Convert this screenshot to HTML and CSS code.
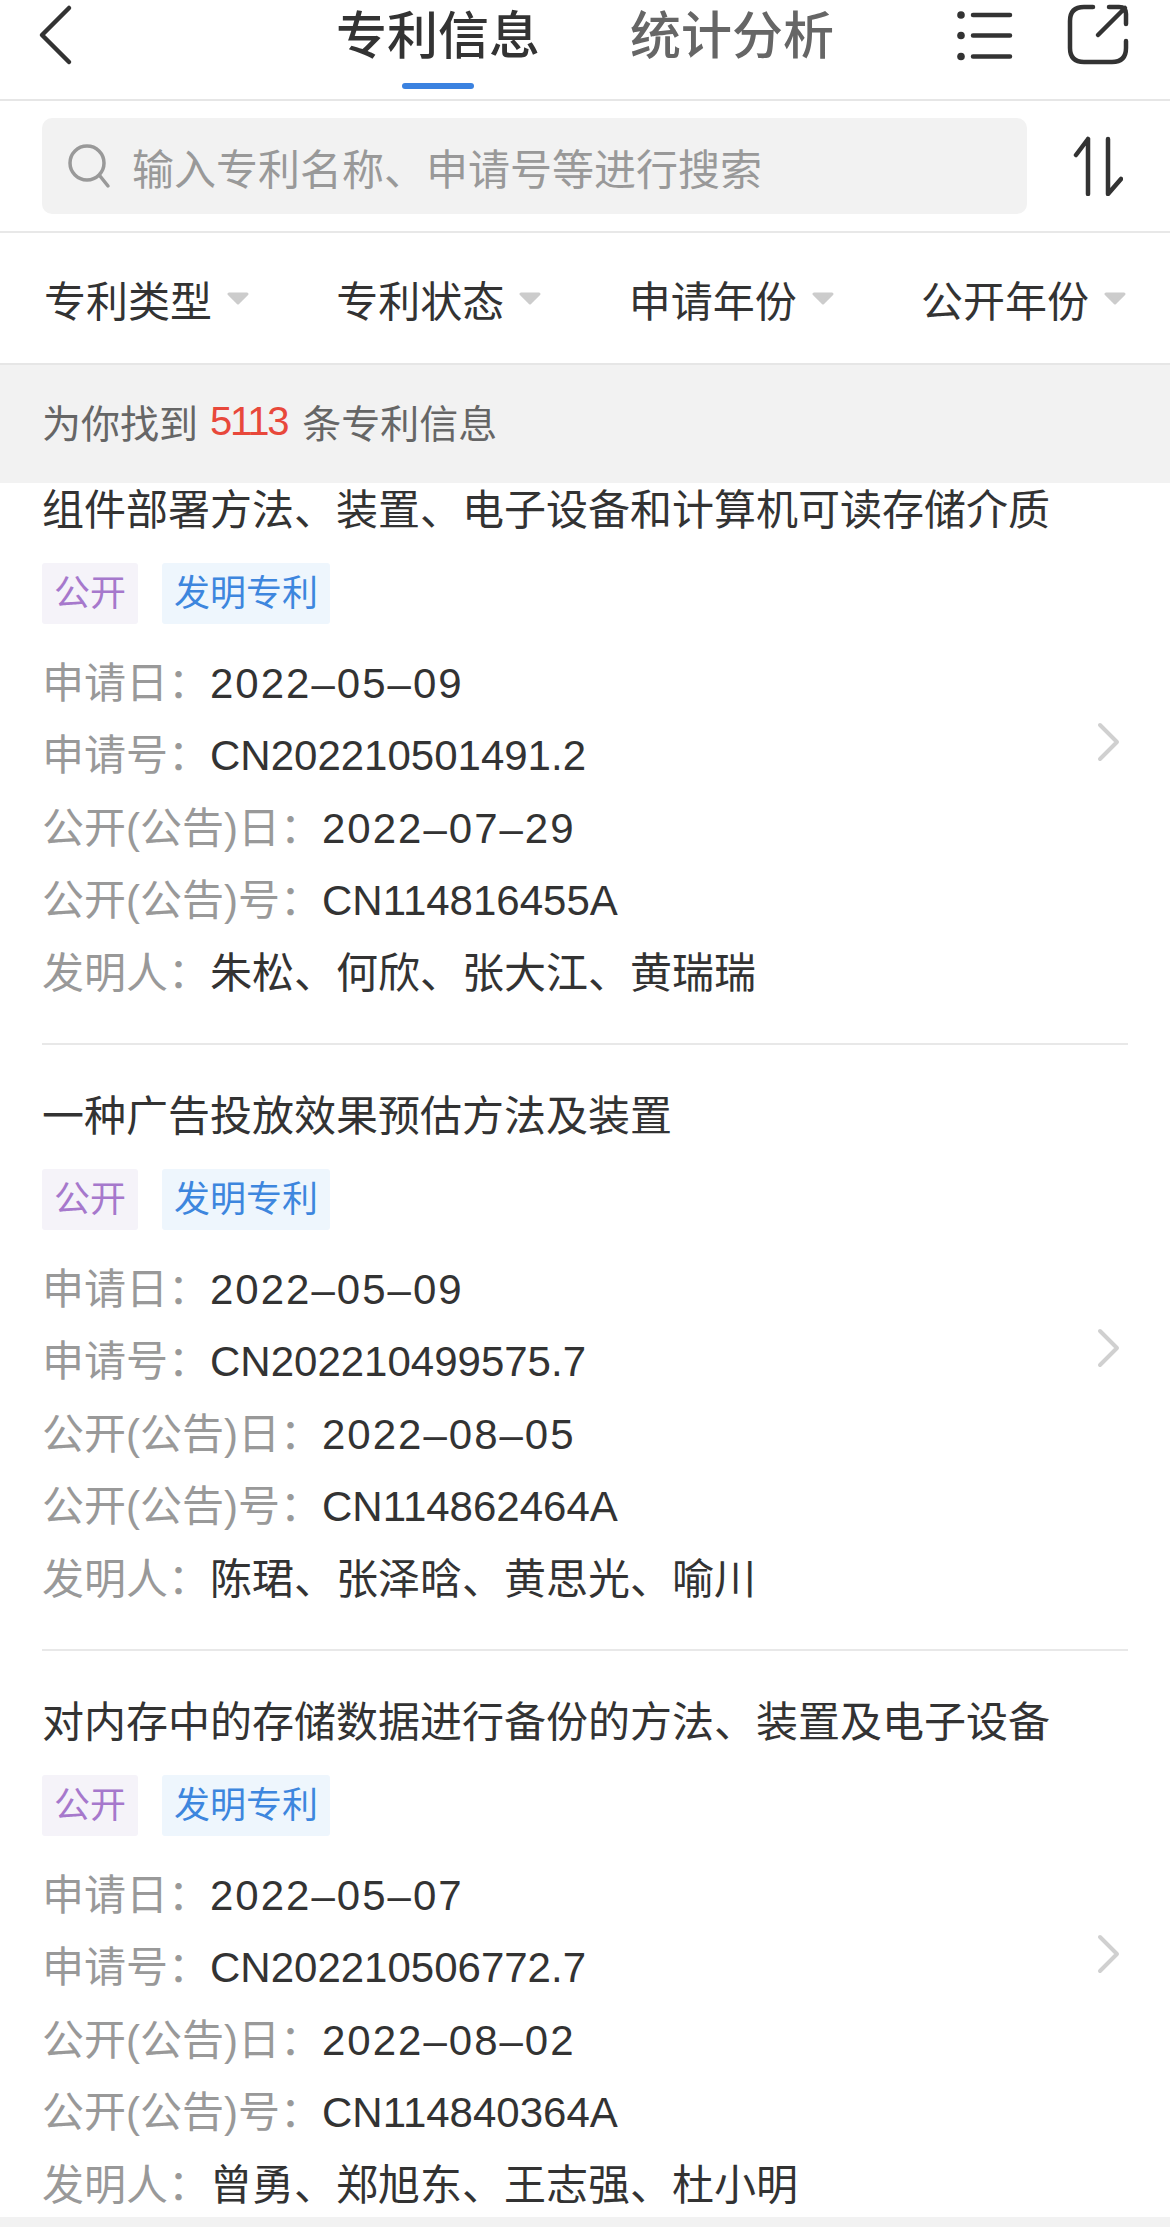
FILE: index.html
```html
<!DOCTYPE html>
<html lang="zh-CN">
<head>
  <meta charset="UTF-8">
  <meta name="viewport" content="width=device-width, initial-scale=1.0">
  <title>专利信息</title>
  <link rel="stylesheet" href="styles.css">
</head>
<body>
  <div id="pagina">
    <!--Kop met tabs-->
    <div class="kop">
      <svg class="terug" width="40" height="64" viewBox="0 0 40 64"><path d="M31 5 L4 32 L31 59" /></svg>
      <div class="tabs">
        <div class="tab actief">专利信息</div>
        <div class="tab">统计分析</div>
      </div>
      <svg class="kopicoon" width="180" height="70" viewBox="0 0 180 70">
        <circle cx="11" cy="15" r="3.8" class="vol" />
        <circle cx="11" cy="35.5" r="3.8" class="vol" />
        <circle cx="11" cy="56.5" r="3.8" class="vol" />
        <path d="M23 15 H60 M23 35.5 H60 M23 56.5 H60" />
        <path d="M143 7 H134 Q120 7 120 21 V48 Q120 62 134 62 H162 Q176 62 176 48 V41" />
        <path d="M148 35 L175 8 M159 7 H169 Q176 7 176 14 V24" />
      </svg>
    </div>

    <div class="zoekrij">
      <div class="zoekbalk">
        <svg width="46" height="46" viewBox="0 0 46 46"><circle cx="20" cy="20" r="17" /><path d="M33 33 L41 43" /></svg>
        <span>输入专利名称、申请号等进行搜索</span>
      </div>
      <svg class="sorteer" width="50" height="60" viewBox="0 0 50 60"><path d="M15 3 V58 M3 19 L15 3 M35 3 V58 L48 43" /></svg>
    </div>

    <div class="filters">
      <div class="filter">专利类型<svg width="22" height="13" viewBox="0 0 22 13"><path class="pijltje" d="M2 2 H20 L11 11 Z" /></svg></div>
      <div class="filter">专利状态<svg width="22" height="13" viewBox="0 0 22 13"><path class="pijltje" d="M2 2 H20 L11 11 Z" /></svg></div>
      <div class="filter">申请年份<svg width="22" height="13" viewBox="0 0 22 13"><path class="pijltje" d="M2 2 H20 L11 11 Z" /></svg></div>
      <div class="filter">公开年份<svg width="22" height="13" viewBox="0 0 22 13"><path class="pijltje" d="M2 2 H20 L11 11 Z" /></svg></div>
    </div>

    <div class="aantal">为你找到<span class="getal">5113</span>条专利信息</div>

    <div class="lijst">
      <div class="item eerste">
        <div class="inhoud">
          <div class="titel">组件部署方法、装置、电子设备和计算机可读存储介质</div>
          <div class="labels"><span class="label paars">公开</span><span class="label blauw">发明专利</span></div>
          <div class="rij"><span class="naam">申请日：</span><span class="datum">2022–05–09</span></div>
          <div class="rij"><span class="naam">申请号：</span>CN202210501491.2</div>
          <div class="rij"><span class="naam">公开(公告)日：</span><span class="datum">2022–07–29</span></div>
          <div class="rij"><span class="naam">公开(公告)号：</span>CN114816455A</div>
          <div class="rij"><span class="naam">发明人：</span>朱松、何欣、张大江、黄瑞瑞</div>
        </div>
        <svg class="verder" width="26" height="42" viewBox="0 0 26 42"><path d="M4 4 L21 21 L4 38" /></svg>
      </div>

      <div class="item">
        <div class="inhoud">
          <div class="titel">一种广告投放效果预估方法及装置</div>
          <div class="labels"><span class="label paars">公开</span><span class="label blauw">发明专利</span></div>
          <div class="rij"><span class="naam">申请日：</span><span class="datum">2022–05–09</span></div>
          <div class="rij"><span class="naam">申请号：</span>CN202210499575.7</div>
          <div class="rij"><span class="naam">公开(公告)日：</span><span class="datum">2022–08–05</span></div>
          <div class="rij"><span class="naam">公开(公告)号：</span>CN114862464A</div>
          <div class="rij"><span class="naam">发明人：</span>陈珺、张泽晗、黄思光、喻川</div>
        </div>
        <svg class="verder" width="26" height="42" viewBox="0 0 26 42"><path d="M4 4 L21 21 L4 38" /></svg>
      </div>

      <div class="item">
        <div class="inhoud">
          <div class="titel">对内存中的存储数据进行备份的方法、装置及电子设备</div>
          <div class="labels"><span class="label paars">公开</span><span class="label blauw">发明专利</span></div>
          <div class="rij"><span class="naam">申请日：</span><span class="datum">2022–05–07</span></div>
          <div class="rij"><span class="naam">申请号：</span>CN202210506772.7</div>
          <div class="rij"><span class="naam">公开(公告)日：</span><span class="datum">2022–08–02</span></div>
          <div class="rij"><span class="naam">公开(公告)号：</span>CN114840364A</div>
          <div class="rij"><span class="naam">发明人：</span>曾勇、郑旭东、王志强、杜小明</div>
        </div>
        <svg class="verder" width="26" height="42" viewBox="0 0 26 42"><path d="M4 4 L21 21 L4 38" /></svg>
      </div>
    </div>

    <div class="onderrand"></div>
  </div>
</body>
</html>
```

FILE: styles.css
```css
* {
  box-sizing: border-box;
}

body {
  margin: 0;
  background: #fff;
  color: #333;
  font-family: "Liberation Sans", "Noto Sans CJK SC", sans-serif;
  font-size: 42px;
}

#pagina {
  display: flex;
  flex-direction: column;
  height: 2227px;
  overflow: hidden;
}

svg path,
svg circle {
  fill: none;
  stroke: #333;
  stroke-linecap: round;
  stroke-linejoin: round;
}

/* kop */
.kop {
  display: flex;
  align-items: flex-start;
  height: 101px;
  padding-left: 38px;
  border-bottom: 2px solid #e6e6e6;
}

.terug {
  margin-top: 3px;
}

.terug path {
  stroke-width: 4.5;
}

.tabs {
  display: flex;
  gap: 90px;
  margin-left: 258px;
}

.tab {
  position: relative;
  height: 72px;
  font-size: 51px;
  line-height: 74px;
  font-weight: 500;
  color: #666;
}

.tab.actief {
  color: #333;
}

.tab.actief::after {
  content: "";
  position: absolute;
  left: 66px;
  top: 83px;
  width: 72px;
  height: 6px;
  border-radius: 3px;
  background: #3b82e0;
}

.kopicoon {
  margin-left: 116px;
  overflow: visible;
}

.kopicoon path {
  stroke-width: 4.5;
}

.kopicoon .vol {
  fill: #333;
  stroke: none;
}

/* zoeken */
.zoekrij {
  display: flex;
  align-items: center;
  height: 132px;
  padding: 0 0 0 42px;
  border-bottom: 2px solid #e8e8e8;
}

.zoekbalk {
  display: flex;
  align-items: center;
  gap: 19px;
  width: 985px;
  height: 96px;
  padding-left: 25px;
  border-radius: 10px;
  background: #f2f2f2;
  color: #999;
}

.zoekbalk svg path,
.zoekbalk svg circle {
  stroke: #999;
  stroke-width: 3.5;
}

.sorteer {
  margin-left: 46px;
}

.sorteer path {
  stroke-width: 4.5;
}

/* filters */
.filters {
  display: flex;
  justify-content: space-between;
  align-items: center;
  height: 132px;
  padding: 0 44px;
  border-bottom: 2px solid #e6e6e6;
}

.filter {
  display: flex;
  align-items: center;
  gap: 15px;
}

svg .pijltje {
  fill: #ccc;
  stroke: #ccc;
  stroke-width: 3;
}

/* aantal */
.aantal {
  display: flex;
  align-items: center;
  height: 118px;
  padding: 0 0 6px 42px;
  background: #f2f2f2;
  color: #666;
  font-size: 39px;
}

.getal {
  margin: 0 15px 0 12px;
  color: #e8483b;
  font-size: 40px;
  letter-spacing: -2.2px;
}

/* lijst */
.lijst {
  flex: 1;
  overflow: hidden;
}

.item {
  display: flex;
  align-items: center;
  justify-content: space-between;
  height: 606px;
  margin: 0 42px;
  padding-right: 6px;
  border-bottom: 2px solid #e8e8e8;
}

.item.eerste {
  margin-top: -44px;
}

.inhoud {
  padding: 44px 0 35px;
}

.titel {
  height: 60px;
  line-height: 60px;
  white-space: nowrap;
}

.labels {
  display: flex;
  gap: 24px;
  margin: 22px 0 24px;
}

.label {
  height: 61px;
  padding: 0 12px;
  border-radius: 3px;
  font-size: 36px;
  line-height: 61px;
}

.paars {
  background: #f5f3f9;
  color: #a678cc;
}

.blauw {
  background: #eef6fd;
  color: #3d86de;
}

.rij {
  height: 72.4px;
  line-height: 72.4px;
  white-space: nowrap;
}

.naam {
  color: #999;
}

.datum {
  letter-spacing: 2px;
}

.verder {
  margin-top: 2px;
}

.verder path {
  stroke: #d0d0d0;
  stroke-width: 4;
}

.onderrand {
  height: 10px;
  background: #f2f2f2;
}
```
